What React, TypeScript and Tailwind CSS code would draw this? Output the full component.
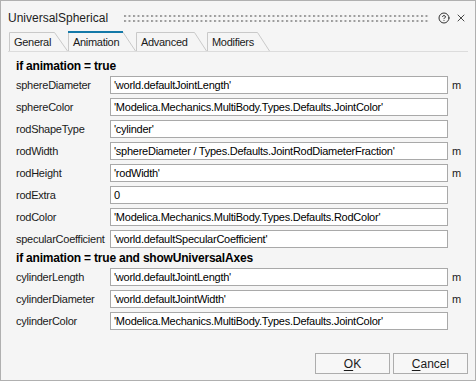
import { CircleHelp, X } from "lucide-react";

type Row = { label: string; value: string; unit?: string };

const ANIMATION_ROWS: Row[] = [
  { label: "sphereDiameter", value: "'world.defaultJointLength'", unit: "m" },
  { label: "sphereColor", value: "'Modelica.Mechanics.MultiBody.Types.Defaults.JointColor'" },
  { label: "rodShapeType", value: "'cylinder'" },
  { label: "rodWidth", value: "'sphereDiameter / Types.Defaults.JointRodDiameterFraction'", unit: "m" },
  { label: "rodHeight", value: "'rodWidth'", unit: "m" },
  { label: "rodExtra", value: "0" },
  { label: "rodColor", value: "'Modelica.Mechanics.MultiBody.Types.Defaults.RodColor'" },
  { label: "specularCoefficient", value: "'world.defaultSpecularCoefficient'" },
];

const AXES_ROWS: Row[] = [
  { label: "cylinderLength", value: "'world.defaultJointLength'", unit: "m" },
  { label: "cylinderDiameter", value: "'world.defaultJointWidth'", unit: "m" },
  { label: "cylinderColor", value: "'Modelica.Mechanics.MultiBody.Types.Defaults.JointColor'" },
];

const TABS = [
  { name: "General", width: 59, flat: 45 },
  { name: "Animation", width: 68, flat: 54, active: true },
  { name: "Advanced", width: 71, flat: 58 },
  { name: "Modifiers", width: 63, flat: 50 },
];

function Tab({ name, width, flat, active }: { name: string; width: number; flat: number; active?: boolean }) {
  const top = active ? 0.5 : 1.5;
  return (
    <div className="relative h-[20px] shrink-0" style={{ width }}>
      <svg className="absolute inset-0" width={width} height={20}>
        <path
          d={`M0.5 20 V${top} H${flat + 0.5} L${width - 0.5} 20`}
          fill="none"
          stroke="#c9c9c9"
        />
        {active && <rect x={0} y={0} width={flat + 1} height={2} fill="#1479a8" />}
      </svg>
      <span className="relative block pl-[5px] pt-[5px] text-[11px] leading-[13px] tracking-[-0.3px] text-[#1a1a1a]">
        {name}
      </span>
    </div>
  );
}

function Field({ label, value, unit }: Row) {
  return (
    <div className="flex h-[22px] items-center">
      <span className="w-[94px] shrink-0 text-[11px] tracking-[-0.25px] text-[#1a1a1a]">{label}</span>
      <div className="flex h-[18px] w-[338px] shrink-0 items-center border border-[#a9a9a9] bg-white pl-[3px] text-[11px] tracking-[-0.25px] text-black">
        {value}
      </div>
      <span className="pl-[4px] text-[11px] text-[#1a1a1a]">{unit}</span>
    </div>
  );
}

function Header({ children }: { children: string }) {
  return (
    <div className="flex h-[16px] items-center text-[12px] font-bold tracking-[-0.2px] text-black">
      {children}
    </div>
  );
}

export default function App() {
  return (
    <div className="flex h-[381px] w-[476px] flex-col border border-[#b0b0b0] bg-[#f5f5f5] font-['Liberation_Sans',Arial,sans-serif]">
      {/* title bar */}
      <div className="flex h-[30px] items-center pl-[7px] pr-[8px] pt-[3px]">
        <span className="text-[12px] text-[#222]">UniversalSpherical</span>
        <svg className="ml-[16px] h-[8px] flex-1" height={8}>
          <defs>
            <pattern id="grip" width="4.5" height="5" patternUnits="userSpaceOnUse">
              <rect x="0" y="1" width="2" height="2" fill="#9c9c9c" />
            </pattern>
          </defs>
          <rect width="100%" height="8" fill="url(#grip)" />
        </svg>
        <div className="ml-[9px] flex items-center gap-[5px] text-[#333]">
          <CircleHelp size={12} strokeWidth={2} />
          <X size={12} strokeWidth={1.8} />
        </div>
      </div>

      {/* tabs */}
      <div className="ml-[7px] mr-[7px] flex border-b border-[#dcdcdc] pl-[1px]">
        {TABS.map((t) => (
          <Tab key={t.name} {...t} />
        ))}
      </div>

      {/* parameters */}
      <div className="flex flex-col pl-[15px] pt-[6px]">
        <Header>if animation = true</Header>
        {ANIMATION_ROWS.map((r) => (
          <Field key={r.label} {...r} />
        ))}
        <Header>if animation = true and showUniversalAxes</Header>
        {AXES_ROWS.map((r) => (
          <Field key={r.label} {...r} />
        ))}
      </div>

      {/* buttons */}
      <div className="mt-auto flex justify-end gap-[3px] pb-[6px] pr-[7px]">
        <button className="h-[21px] w-[75px] border border-[#adadad] bg-[#f7f7f7] text-[12px] text-[#1a1a1a]">
          <span className="underline underline-offset-2">O</span>K
        </button>
        <button className="h-[21px] w-[75px] border border-[#adadad] bg-[#f7f7f7] text-[12px] text-[#1a1a1a]">
          <span className="underline underline-offset-2">C</span>ancel
        </button>
      </div>
    </div>
  );
}
